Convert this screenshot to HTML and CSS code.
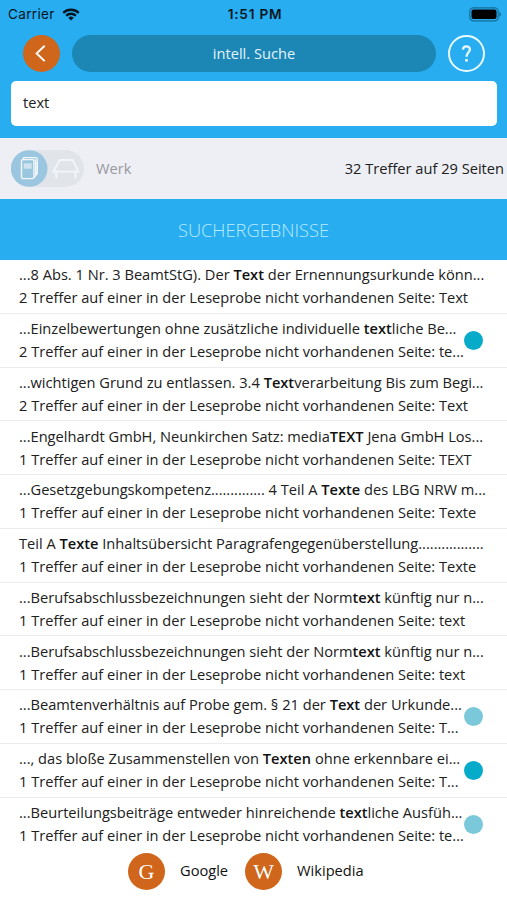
FILE: index.html
```html
<!DOCTYPE html>
<html lang="de">
<head>
    <meta charset="UTF-8">
    <meta name="viewport" content="width=device-width, initial-scale=1.0">
    <title>intell. Suche</title>
    <link rel="stylesheet" href="styles.css">
</head>
<body>
    <header class="header">
        <div class="status">
            <div class="status-left">
                <span>Carrier</span>
                <svg class="wifi" width="18" height="13" viewBox="0 0 18 13">
                    <path d="M1.2 4.8C5.6.7 12.4.7 16.8 4.8M4.1 7.6C6.9 5.1 11.1 5.1 13.9 7.6" fill="none" stroke="#05151f" stroke-width="2.3"/>
                    <path d="M9 12.5L6.2 9.7Q9 7.4 11.8 9.7Z" fill="#05151f"/>
                </svg>
            </div>
            <span class="status-time">1:51 PM</span>
            <svg class="battery" width="33" height="15" viewBox="0 0 33 15">
                <rect x=".8" y=".8" width="28.4" height="13" rx="3.6" fill="none" stroke="#176c98" stroke-width="1.2"/>
                <rect x="2.5" y="2.6" width="25" height="9.4" rx="2" fill="#000"/>
                <path d="M30.4 5v4.6q1.6-.6 1.6-2.3T30.4 5z" fill="#176c98"/>
            </svg>
        </div>
        <div class="nav">
            <a class="round back" href="#">
                <svg width="37" height="37" viewBox="0 0 37 37">
                    <path d="M21.7 10.7L13.7 18.4L21.7 26.1" fill="none" stroke="#fff" stroke-width="2"/>
                </svg>
            </a>
            <h1 class="title">intell. Suche</h1>
            <a class="round help" href="#">
                <svg width="33" height="33" viewBox="0 0 33 33" fill="none" stroke="#e9fbff" stroke-width="2.3">
                    <path d="M12.9 12.6C13.1 8.3 19.9 8.3 19.9 12.3C19.9 15.6 16.5 15.6 16.5 19.8"/>
                    <circle cx="16.5" cy="23.2" r="1.5" fill="#e9fbff" stroke="none"/>
                </svg>
            </a>
        </div>
        <input class="search" type="text" value="text">
    </header>

    <div class="filter">
        <div class="toggle">
            <svg width="74" height="37" viewBox="0 0 74 37" fill="none" stroke="#f2f6fa" stroke-width="1.4">
                <circle cx="18.2" cy="18.5" r="18.3" fill="#9ac7df" stroke="none"/>
                <rect x="10.5" y="9.6" width="12.4" height="19" rx="1.5"/>
                <path d="M11.5 9L13.2 7.6H24Q26.3 7.6 26.3 10V23.5L23.1 27.5M23 9.6Q24.7 9.8 24.7 12V25"/>
                <path d="M12.7 13.3h8v5.4h-8z" fill="#cfe4ef" stroke="none"/>
                <path d="M48.8 10H61.6L67.4 21.6H42.4ZM45.3 22v6.6M64.4 22v6.6" stroke-width="1.9"/>
            </svg>
        </div>
        <span class="filter-label">Werk</span>
        <span class="filter-count">32 Treffer auf 29 Seiten</span>
    </div>

    <h2 class="section-title">SUCHERGEBNISSE</h2>

    <ul class="results">
        <li>
            <div class="hit">
                <p>...8 Abs. 1 Nr. 3 BeamtStG). Der <b>Text</b> der Ernennungsurkunde könn...</p>
                <p>2 Treffer auf einer in der Leseprobe nicht vorhandenen Seite: Text</p>
            </div>
        </li>
        <li>
            <div class="hit">
                <p>...Einzelbewertungen ohne zusätzliche individuelle <b>text</b>liche Be...</p>
                <p>2 Treffer auf einer in der Leseprobe nicht vorhandenen Seite: te...</p>
            </div>
            <span class="dot"></span>
        </li>
        <li>
            <div class="hit">
                <p>...wichtigen Grund zu entlassen. 3.4 <b>Text</b>verarbeitung Bis zum Begi...</p>
                <p>2 Treffer auf einer in der Leseprobe nicht vorhandenen Seite: Text</p>
            </div>
        </li>
        <li>
            <div class="hit">
                <p>...Engelhardt GmbH, Neunkirchen Satz: media<b>TEXT</b> Jena GmbH Los...</p>
                <p>1 Treffer auf einer in der Leseprobe nicht vorhandenen Seite: TEXT</p>
            </div>
        </li>
        <li>
            <div class="hit">
                <p>...Gesetzgebungskompetenz.............. 4 Teil A <b>Texte</b> des LBG NRW m...</p>
                <p>1 Treffer auf einer in der Leseprobe nicht vorhandenen Seite: Texte</p>
            </div>
        </li>
        <li>
            <div class="hit">
                <p>Teil A <b>Texte</b> Inhaltsübersicht Paragrafengegenüberstellung.................</p>
                <p>1 Treffer auf einer in der Leseprobe nicht vorhandenen Seite: Texte</p>
            </div>
        </li>
        <li>
            <div class="hit">
                <p>...Berufsabschlussbezeichnungen sieht der Norm<b>text</b> künftig nur n...</p>
                <p>1 Treffer auf einer in der Leseprobe nicht vorhandenen Seite: text</p>
            </div>
        </li>
        <li>
            <div class="hit">
                <p>...Berufsabschlussbezeichnungen sieht der Norm<b>text</b> künftig nur n...</p>
                <p>1 Treffer auf einer in der Leseprobe nicht vorhandenen Seite: text</p>
            </div>
        </li>
        <li>
            <div class="hit">
                <p>...Beamtenverhältnis auf Probe gem. § 21 der <b>Text</b> der Urkunde...</p>
                <p>1 Treffer auf einer in der Leseprobe nicht vorhandenen Seite: T...</p>
            </div>
            <span class="dot dot-light"></span>
        </li>
        <li>
            <div class="hit">
                <p>..., das bloße Zusammenstellen von <b>Texten</b> ohne erkennbare ei...</p>
                <p>1 Treffer auf einer in der Leseprobe nicht vorhandenen Seite: T...</p>
            </div>
            <span class="dot"></span>
        </li>
        <li>
            <div class="hit">
                <p>...Beurteilungsbeiträge entweder hinreichende <b>text</b>liche Ausfüh...</p>
                <p>1 Treffer auf einer in der Leseprobe nicht vorhandenen Seite: te...</p>
            </div>
            <span class="dot dot-light"></span>
        </li>
    </ul>

    <footer class="external">
        <a class="external-link google" href="#"><span class="round letter">G</span><span class="external-name">Google</span></a>
        <a class="external-link" href="#"><span class="round letter">W</span><span class="external-name">Wikipedia</span></a>
    </footer>
</body>
</html>
```
FILE: styles.css
```css
*, *:before, *:after {
    box-sizing: border-box;
}
body {
    margin: 0;
    height: 900px;
    overflow: hidden;
    background: #fff;
    color: #202020;
    font-family: "Open Sans", "Noto Sans", sans-serif;
    font-size: 14.63px;
}
a {
    color: inherit;
    text-decoration: none;
}
.header {
    height: 138px;
    background: #27adf0;
}
.status {
    display: grid;
    grid-template-columns: 1fr auto 1fr;
    align-items: center;
    height: 28px;
    padding: 0 5px 0 8px;
    color: #05151f;
    font-family: Inter, sans-serif;
    font-size: 13.6px;
}
.status-left {
    display: flex;
    align-items: center;
    gap: 7px;
    letter-spacing: 0.3px;
}
.status-time {
    font-weight: 600;
    letter-spacing: 0.8px;
}
.battery {
    justify-self: end;
}
.nav {
    display: flex;
    align-items: flex-start;
    gap: 12px;
    height: 53px;
    padding: 7px 22px 0 23px;
}
.round {
    display: flex;
    flex: none;
    align-items: center;
    justify-content: center;
    width: 37px;
    height: 37px;
    border-radius: 50%;
    background: #cf661b;
}
.title {
    flex: 1;
    height: 37px;
    margin: 0;
    border-radius: 19px;
    background: #1c87b5;
    color: #e4f4fb;
    font-size: 14.63px;
    font-weight: 400;
    line-height: 37px;
    text-align: center;
}
.help {
    border: 2px solid #e9fbff;
    background: none;
}
.search {
    display: block;
    width: 486px;
    height: 45px;
    margin-left: 11px;
    padding: 0 12px 3px;
    border: none;
    border-radius: 5px;
    background: #fff;
    color: #202020;
    font: inherit;
}
.filter {
    display: flex;
    align-items: center;
    height: 61px;
    padding: 0 3px 1px 11px;
    background: #eeeff5;
}
.toggle {
    width: 73px;
    height: 37px;
    border-radius: 19px;
    background: #e1e5ea;
}
.filter-label {
    margin-left: 12px;
    color: #97989d;
}
.filter-count {
    margin-left: auto;
}
.section-title {
    height: 61px;
    margin: 0;
    background: #27adf0;
    color: #b9ebff;
    font-size: 18.3px;
    font-weight: 300;
    line-height: 61px;
    text-align: center;
}
.results {
    margin: 0;
    padding: 0;
    list-style: none;
}
.results li {
    display: flex;
    align-items: center;
    height: 53.75px;
    padding: 0 24px 0 19px;
    border-bottom: 1px solid #ececec;
}
.results li:last-child {
    border-bottom: none;
}
.hit {
    flex: 1;
    min-width: 0;
}
.hit p {
    margin: 0;
    line-height: 23px;
    white-space: nowrap;
}
.hit b {
    color: #111;
    font-weight: 600;
}
.dot {
    flex: none;
    width: 19px;
    height: 19px;
    border-radius: 50%;
    background: #06abc9;
}
.dot-light {
    background: #7bc8db;
}
.external {
    display: flex;
    padding: 2px 0 0 128px;
}
.external-link {
    display: flex;
    align-items: center;
    gap: 15px;
    color: #111;
}
.external-name {
    padding-bottom: 3px;
}
.google {
    margin-right: 17px;
}
.letter {
    color: #fff;
    font-family: "Liberation Serif", serif;
    font-size: 22px;
}
```
